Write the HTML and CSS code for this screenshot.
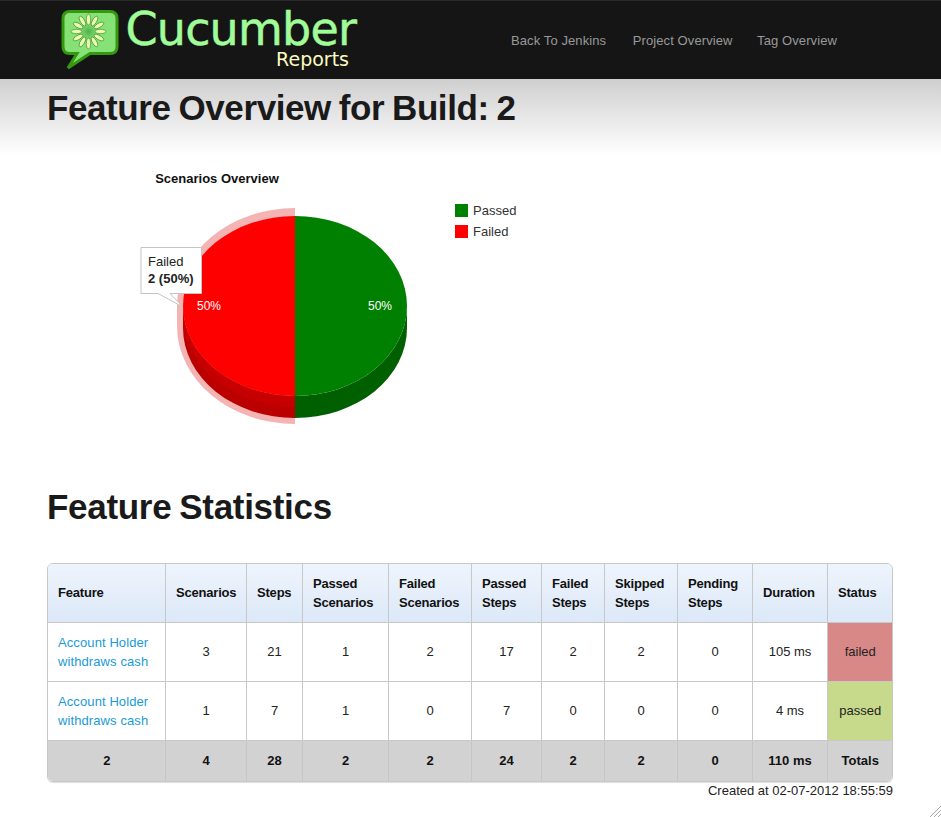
FILE: index.html
```html
<!DOCTYPE html>
<html lang="en">
<head>
    <meta charset="UTF-8">
    <meta name="viewport" content="width=device-width, initial-scale=1.0">
    <title>Cucumber Reports</title>
    <link rel="stylesheet" href="styles.css">
</head>
<body>
    <header class="top-bar">
        <div class="logo">
            <svg class="logo-icon" width="62" height="62" viewBox="0 0 62 62">
                <defs>
                    <radialGradient id="seed-core">
                        <stop offset="0" stop-color="#4fb04f"/>
                        <stop offset="1" stop-color="#86e277"/>
                    </radialGradient>
                </defs>
                <path d="M10 2.500H50Q57 2.500 57 9.500V37.500Q57 44.500 50 44.500H30L8 59L17 44.500H10Q3 44.500 3 37.500V9.500Q3 2.500 10 2.500Z" fill="#86e277" stroke="#35980f" stroke-width="3"/>
                <circle cx="28.500" cy="22.500" r="9" fill="url(#seed-core)"/>
                <g fill="#e9fcb4" stroke="#3d8f22" stroke-width="0.7">
                    <ellipse cx="28.500" cy="10.500" rx="2.200" ry="5.500"/>
                    <ellipse cx="28.500" cy="10.500" rx="2.200" ry="5.500" transform="rotate(30 28.500 22.500)"/>
                    <ellipse cx="28.500" cy="10.500" rx="2.200" ry="5.500" transform="rotate(60 28.500 22.500)"/>
                    <ellipse cx="28.500" cy="10.500" rx="2.200" ry="5.500" transform="rotate(90 28.500 22.500)"/>
                    <ellipse cx="28.500" cy="10.500" rx="2.200" ry="5.500" transform="rotate(120 28.500 22.500)"/>
                    <ellipse cx="28.500" cy="10.500" rx="2.200" ry="5.500" transform="rotate(150 28.500 22.500)"/>
                    <ellipse cx="28.500" cy="10.500" rx="2.200" ry="5.500" transform="rotate(180 28.500 22.500)"/>
                    <ellipse cx="28.500" cy="10.500" rx="2.200" ry="5.500" transform="rotate(210 28.500 22.500)"/>
                    <ellipse cx="28.500" cy="10.500" rx="2.200" ry="5.500" transform="rotate(240 28.500 22.500)"/>
                    <ellipse cx="28.500" cy="10.500" rx="2.200" ry="5.500" transform="rotate(270 28.500 22.500)"/>
                    <ellipse cx="28.500" cy="10.500" rx="2.200" ry="5.500" transform="rotate(300 28.500 22.500)"/>
                    <ellipse cx="28.500" cy="10.500" rx="2.200" ry="5.500" transform="rotate(330 28.500 22.500)"/>
                </g>
            </svg>
            <div class="logo-text">
                <span class="logo-name">Cucumber</span>
                <span class="logo-sub">Reports</span>
            </div>
        </div>
        <nav class="main-nav">
            <a href="#">Back To Jenkins</a>
            <a href="#">Project Overview</a>
            <a href="#">Tag Overview</a>
        </nav>
    </header>

    <div class="fade-band">
        <h1>Feature Overview for Build: 2</h1>
    </div>

    <!-- pie chart, drawn on its own canvas -->
    <svg class="chart" width="600" height="290" viewBox="0 0 600 290">
        <text class="chart-title" x="170" y="27" text-anchor="middle">Scenarios Overview</text>

        <path d="M248 52A118 98 0 0 0 130 150V170A118 98 0 0 0 248 268Z" fill="#f4b4b4"/>
        <path d="M248 240V262A112 90 0 0 0 360 172V150A112 90 0 0 1 248 240Z" fill="#006000"/>
        <path d="M248 240V262A112 90 0 0 1 136 172V150A112 90 0 0 0 248 240Z" fill="#bb0000"/>
        <path d="M248 240V251A112 90 0 0 1 136 161V150A112 90 0 0 0 248 240Z" fill="#c60000"/>
        <path d="M248 60V240A112 90 0 0 0 248 60Z" fill="#008000"/>
        <path d="M248 60V240A112 90 0 0 1 248 60Z" fill="#ff0000"/>
        <text class="pie-label" x="333" y="154" text-anchor="middle">50%</text>
        <text class="pie-label" x="162" y="154" text-anchor="middle">50%</text>

        <rect x="408" y="48" width="13" height="13" fill="#008000"/>
        <text class="legend-text" x="426" y="59">Passed</text>
        <rect x="408" y="69" width="13" height="13" fill="#ff0000"/>
        <text class="legend-text" x="426" y="80">Failed</text>

        <path d="M94 91.500H154.500V137.500H123L136 151L111 137.500H94Z" fill="#fff" stroke="#c4c4c4"/>
        <text class="tip-text" x="101" y="110">Failed</text>
        <text class="tip-text tip-bold" x="101" y="127">2 (50%)</text>
    </svg>

    <h2>Feature Statistics</h2>

    <div class="table-wrap">
        <table class="stats">
            <colgroup>
                <col class="c-feature"><col class="c-scen"><col class="c-steps"><col class="c-pscen"><col class="c-fscen">
                <col class="c-psteps"><col class="c-fsteps"><col class="c-ssteps"><col class="c-nsteps"><col class="c-dur"><col class="c-status">
            </colgroup>
            <thead>
                <tr>
                    <th>Feature</th>
                    <th>Scenarios</th>
                    <th>Steps</th>
                    <th class="two-line">Passed Scenarios</th>
                    <th class="two-line">Failed Scenarios</th>
                    <th class="two-line">Passed Steps</th>
                    <th class="two-line">Failed Steps</th>
                    <th class="two-line">Skipped Steps</th>
                    <th class="two-line">Pending Steps</th>
                    <th>Duration</th>
                    <th>Status</th>
                </tr>
            </thead>
            <tbody>
                <tr>
                    <td class="two-line"><a href="#">Account Holder withdraws cash</a></td>
                    <td>3</td><td>21</td><td>1</td><td>2</td><td>17</td><td>2</td><td>2</td><td>0</td><td>105 ms</td>
                    <td class="failed">failed</td>
                </tr>
                <tr>
                    <td class="two-line"><a href="#">Account Holder withdraws cash</a></td>
                    <td>1</td><td>7</td><td>1</td><td>0</td><td>7</td><td>0</td><td>0</td><td>0</td><td>4 ms</td>
                    <td class="passed">passed</td>
                </tr>
            </tbody>
            <tfoot>
                <tr>
                    <td>2</td><td>4</td><td>28</td><td>2</td><td>2</td><td>24</td><td>2</td><td>2</td><td>0</td><td>110 ms</td><td>Totals</td>
                </tr>
            </tfoot>
        </table>
    </div>
    <p class="created">Created at 02-07-2012 18:55:59</p>

    <svg class="grip" width="12" height="12" viewBox="0 0 12 12">
        <path d="M1 12L12 1M5 12L12 5M9 12L12 9" stroke="#aaa" fill="none"/>
    </svg>
</body>
</html>
```

FILE: styles.css
```css
body {
    font-family: "Liberation Sans", Arial, sans-serif;
    font-size: 13px;
    color: #1a1a1a;
    background-color: #fff;
    margin: 0;
    padding: 0;
    overflow: hidden;
}

.top-bar {
    height: 79px;
    box-sizing: border-box;
    border-top: 1px solid #2a2a2a;
    background-color: #151515;
    display: flex;
    align-items: flex-start;
    padding-left: 60px;
}

.logo {
    display: flex;
    width: 451px;
}

.logo-icon {
    margin-top: 8px;
    flex: none;
}

.logo-text {
    display: flex;
    flex-direction: column;
    align-items: flex-end;
    width: 232px;
    margin-left: 6px;
}

.logo-name {
    font-family: "DejaVu Sans", sans-serif;
    font-size: 46px;
    line-height: 44px;
    letter-spacing: -0.8px;
    margin-top: 6px;
    padding-right: 4px;
    color: #a0fc98;
    -webkit-text-stroke: 0.5px #a0fc98;
}

.logo-sub {
    font-family: "DejaVu Sans", sans-serif;
    font-size: 19px;
    line-height: 16px;
    padding-right: 11px;
    color: #fdfbc0;
}

.main-nav {
    display: flex;
    gap: 24.500px;
    padding-top: 32px;
}

.main-nav a {
    color: #999;
    text-decoration: none;
    line-height: 15px;
    letter-spacing: 0.1px;
}

.main-nav a:first-child {
    margin-right: 2px;
}

.fade-band {
    height: 76px;
    padding-left: 47px;
    background: linear-gradient(#cfcfcf, #fff);
}

h1, h2 {
    margin: 0;
    font-size: 35px;
    font-weight: bold;
    letter-spacing: -0.4px;
    word-spacing: -1.5px;
    color: #1a1a1a;
}

h1 {
    line-height: 57px;
}

.chart {
    display: block;
    margin-left: 47px;
    margin-top: 1px;
}

.chart-title {
    font-size: 13px;
    font-weight: bold;
    fill: #111;
}

.pie-label {
    font-size: 12px;
    fill: #fff;
}

.legend-text {
    font-size: 13px;
    fill: #333;
}

.tip-text {
    font-size: 13px;
    fill: #222;
}

.tip-bold {
    font-weight: bold;
}

h2 {
    margin-top: 41px;
    margin-left: 47px;
    line-height: 40px;
    letter-spacing: -0.3px;
}

.table-wrap {
    margin: 36px 48px 0 47px;
    border: 1px solid #c8c8c8;
    border-radius: 6px;
    overflow: hidden;
    box-shadow: 0 1px 1px #ddd;
}

.stats {
    width: 100%;
    table-layout: fixed;
    border-collapse: collapse;
}

.c-feature { width: 117px; }
.c-scen { width: 81px; }
.c-steps { width: 56px; }
.c-pscen { width: 86px; }
.c-fscen { width: 83px; }
.c-psteps { width: 70px; }
.c-fsteps { width: 63px; }
.c-ssteps { width: 73px; }
.c-nsteps { width: 75px; }
.c-dur { width: 75px; }
.c-status { width: 65px; }

.stats th, .stats td {
    padding: 0 10px 0 11px;
    text-align: center;
    border: 1px solid #c8c8c8;
    line-height: 18px;
}

.stats .two-line {
    line-height: 19px;
}

.stats tr > :first-child {
    border-left: none;
}

.stats tr > :last-child {
    border-right: none;
}

.stats thead tr > * {
    border-top: none;
}

.stats tfoot tr > * {
    border-bottom: none;
}

.stats th {
    height: 58px;
    padding-left: 10.500px;
    text-align: left;
    font-weight: bold;
    letter-spacing: -0.2px;
    color: #111;
    background: linear-gradient(#eef4fc, #dce8f8);
}

.stats th:first-child, .stats tbody td:first-child {
    padding-left: 10px;
    text-align: left;
}

.stats tbody td {
    height: 58px;
    color: #222;
}

.stats a {
    color: #1a9bd7;
    text-decoration: none;
    letter-spacing: 0.1px;
}

.stats .failed {
    background-color: #d98888;
}

.stats .passed {
    background-color: #c7d98a;
}

.stats tfoot td {
    height: 40px;
    font-weight: bold;
    color: #111;
    background-color: #d2d2d2;
    border-color: #c6c6c6;
}

.created {
    margin: 1px 48px 0 0;
    text-align: right;
    line-height: 16px;
    color: #222;
}

/* window resize handle in the corner */
.grip {
    position: fixed;
    right: 0;
    bottom: 0;
}
```
